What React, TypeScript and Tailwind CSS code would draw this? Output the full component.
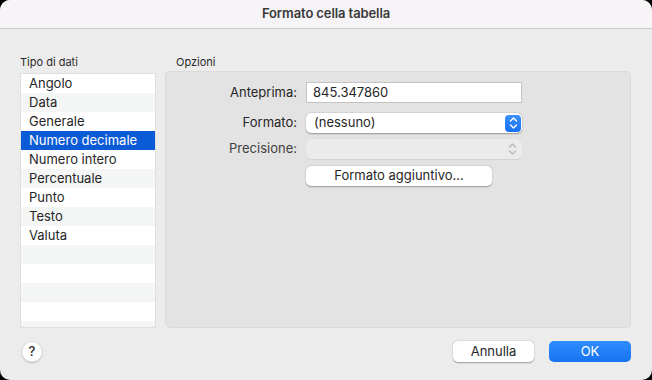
const TYPES = ["Angolo", "Data", "Generale", "Numero decimale", "Numero intero", "Percentuale", "Punto", "Testo", "Valuta"]
const SELECTED = 3

function Stepper({ disabled }: { disabled?: boolean }) {
    return (
        <svg width="9" height="14" viewBox="0 0 9 14" fill="none">
            <path d="M1.5 5 L4.5 2 L7.5 5" stroke={disabled ? "#b8b8b8" : "#fff"} strokeWidth="1.4" strokeLinecap="round" strokeLinejoin="round" />
            <path d="M1.5 9 L4.5 12 L7.5 9" stroke={disabled ? "#b8b8b8" : "#fff"} strokeWidth="1.4" strokeLinecap="round" strokeLinejoin="round" />
        </svg>
    )
}

export default function App() {
    const rows = Array.from({ length: 14 }, (_, i) => TYPES[i] ?? "")

    return (
        <div className="w-[652px] h-[380px] bg-black font-['Inter','Liberation_Sans',sans-serif] text-[13px] text-[#262626]">
            <div className="w-full h-full bg-[#ececec] rounded-[10px] overflow-hidden flex flex-col">
                {/* title bar */}
                <div className="h-[29px] shrink-0 bg-[#f6f4f6] border-b border-[#cacaca] flex items-center justify-center">
                    <p className="font-semibold text-[13px] text-[#3b3b3b] tracking-[-0.1px]">Formato cella tabella</p>
                </div>

                <div className="flex gap-[9px] pl-[20px] pr-[21px] pt-[27px]">
                    {/* tipo di dati */}
                    <div className="w-[136px] shrink-0">
                        <p className="h-[17px] text-[11px] leading-[12px] text-[#2a2a2a]">Tipo di dati</p>
                        <div className="h-[255px] border border-[#dedede] bg-white overflow-hidden">
                            {rows.map((label, i) => (
                                <div
                                    key={i}
                                    className={`h-[19px] pl-[8px] flex items-center leading-none ${
                                        i === SELECTED ? "bg-[#0b5bd6] text-white" : i % 2 === 1 ? "bg-[#f4f5f5]" : "bg-white"
                                    }`}
                                >
                                    {label}
                                </div>
                            ))}
                        </div>
                    </div>

                    {/* opzioni */}
                    <div className="flex-1">
                        <p className="h-[15px] pl-[11px] text-[11px] leading-[12px] text-[#2a2a2a]">Opzioni</p>
                        <div className="h-[257px] rounded-[5px] bg-[#e3e3e3] border border-[#dadada] pt-[10px]">
                            <div className="flex items-center h-[21px]">
                                <span className="w-[131px] text-right">Anteprima:</span>
                                <div className="ml-[9px] w-[216px] h-[21px] bg-white border border-[#c3c3c3] flex items-center pl-[6px]">
                                    845.347860
                                </div>
                            </div>

                            <div className="flex items-center h-[20px] mt-[10px]">
                                <span className="w-[131px] text-right">Formato:</span>
                                <div className="ml-[9px] w-[216px] h-[20px] bg-white rounded-[5px] shadow-[0_0.5px_1.5px_rgba(0,0,0,0.35)] flex items-center pl-[8px] pr-[1px]">
                                    <span className="flex-1">(nessuno)</span>
                                    <div className="w-[16px] h-[17px] rounded-[4px] bg-gradient-to-b from-[#3b8ffb] to-[#1570f0] flex items-center justify-center">
                                        <Stepper />
                                    </div>
                                </div>
                            </div>

                            <div className="flex items-center h-[20px] mt-[6px]">
                                <span className="w-[131px] text-right text-[#3f3f3f]">Precisione:</span>
                                <div className="ml-[9px] w-[216px] h-[20px] bg-[#ebebeb] rounded-[5px] shadow-[0_0.5px_1px_rgba(0,0,0,0.08)] flex items-center justify-end pr-[5px]">
                                    <Stepper disabled />
                                </div>
                            </div>

                            <div className="flex items-center h-[20px] mt-[7px]">
                                <div className="ml-[140px] w-[186px] h-[20px] bg-white rounded-[5px] shadow-[0_0.5px_1.5px_rgba(0,0,0,0.35)] flex items-center justify-center">
                                    Formato aggiuntivo...
                                </div>
                            </div>
                        </div>
                    </div>
                </div>

                {/* footer */}
                <div className="flex items-center pl-[22px] pr-[21px] mt-[13px]">
                    <button className="w-[20px] h-[20px] rounded-full bg-white shadow-[0_0.5px_2px_rgba(0,0,0,0.35)] flex items-center justify-center text-[13px] font-medium text-[#2a2a2a]">
                        ?
                    </button>
                    <div className="flex-1" />
                    <button className="w-[81px] h-[21px] bg-white rounded-[5px] shadow-[0_0.5px_1.5px_rgba(0,0,0,0.35)] text-[13px] text-[#262626]">
                        Annulla
                    </button>
                    <button className="ml-[15px] w-[82px] h-[21px] rounded-[5px] bg-gradient-to-b from-[#2f8cfc] to-[#1673f2] text-[13px] text-white">
                        OK
                    </button>
                </div>
            </div>
        </div>
    )
}
